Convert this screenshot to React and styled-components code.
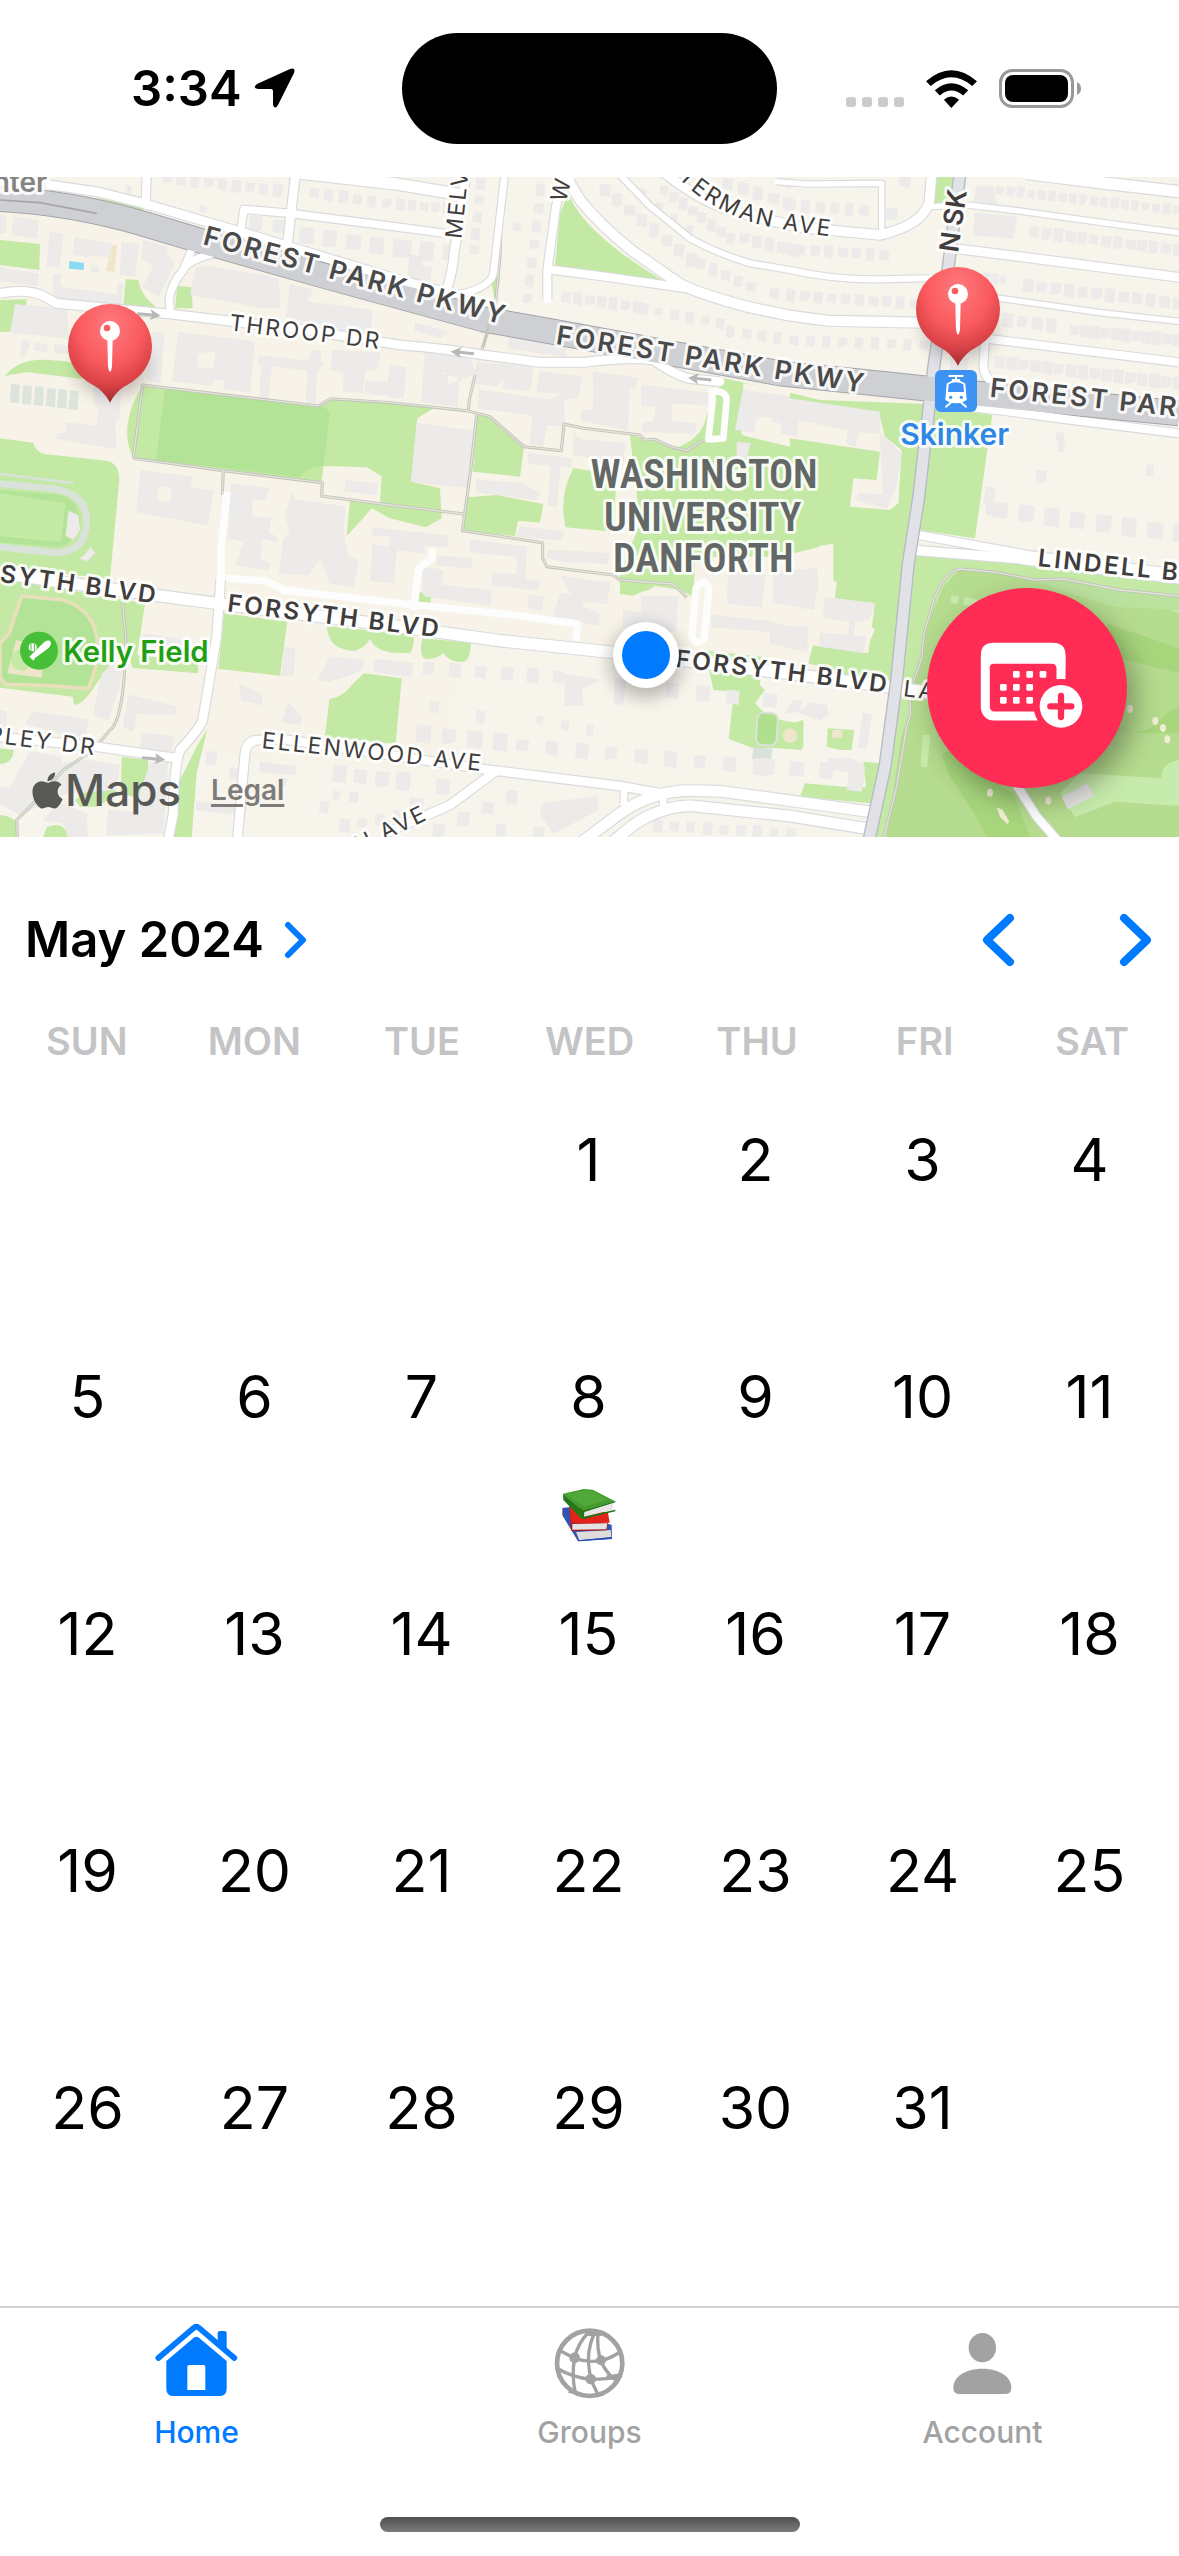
import React, { useState } from "react";
import styled, { createGlobalStyle } from "styled-components";
import { FaApple } from "react-icons/fa";

const font = '"Inter", "Liberation Sans", sans-serif';

const GlobalStyle = createGlobalStyle`
  * { box-sizing: border-box; }
  body { margin: 0; background: #fff; color: #000; font-family: ${font}; }
  button { appearance: none; border: 0; padding: 0; background: none; color: inherit; font: inherit; cursor: pointer; }
  svg { display: block; }
`;

const Screen = styled.div`
  display: flex;
  flex-direction: column;
  min-height: 100vh;
  overflow-x: hidden;
`;

/* ---------- status bar ---------- */

const StatusBar = styled.header`
  display: grid;
  grid-template-columns: 1fr 375px 1fr;
  align-items: center;
  height: 177px;
`;

const StatusLeft = styled.div`
  display: flex;
  align-items: center;
  justify-content: flex-start;
  gap: 12px;
  padding-left: 131px;
`;

const StatusRight = styled.div`
  display: flex;
  align-items: center;
  justify-content: flex-end;
  gap: 22px;
  padding-right: 98px;
`;

const Clock = styled.span`
  font-size: 49px;
  line-height: 60px;
  font-weight: 600;
`;

const Island = styled.div`
  height: 111px;
  border-radius: 56px;
  background: #000;
`;

/* ---------- map ---------- */

const MapPanel = styled.section`
  position: relative;
  height: 660px;
  overflow: hidden;
  background: #f7f4eb;
`;

const MapCanvas = styled.svg`
  width: 100%;
  height: 100%;
`;

const MapText = styled.text`
  font-family: ${font};
  font-size: ${(p) => p.$size}px;
  font-weight: ${(p) => p.$weight || 400};
  letter-spacing: ${(p) => (p.$tracked ? "0.1em" : "normal")};
  fill: ${(p) => p.$color || "#403d3c"};
  stroke: rgba(255, 255, 255, 0.85);
  stroke-width: 18px;
  stroke-linejoin: round;
  paint-order: stroke;
`;

const CampusText = styled(MapText)`
  font-family: "Liberation Sans Narrow", "Roboto Condensed", "Roboto", sans-serif;
`;

const Attribution = styled.div`
  position: absolute;
  left: 32px;
  bottom: 19px;
  display: flex;
  align-items: center;
  gap: 30px;
`;

const MapsBrand = styled.span`
  display: flex;
  align-items: center;
  gap: 2px;
  color: #585856;
  font-size: 44px;
  line-height: 56px;
  font-weight: 500;
`;

const AppleMark = styled(FaApple)`
  width: 31px;
  height: 41px;
`;

const LegalLink = styled.a`
  color: #7e7c79;
  font-size: 28px;
  line-height: 32px;
  font-weight: 600;
  text-decoration: underline;
  text-underline-offset: 4px;
  text-decoration-thickness: 3px;
`;

const AddEventButton = styled.button`
  position: absolute;
  right: 52px;
  bottom: 49px;
  width: 200px;
  height: 200px;
  border-radius: 50%;
  background: #ff2d55;
  box-shadow: 8px 12px 28px rgba(0, 0, 0, 0.34);
`;

/* ---------- calendar ---------- */

const Calendar = styled.main`
  padding-top: 73px;
`;

const CalendarHeader = styled.div`
  display: flex;
  align-items: center;
  justify-content: space-between;
  height: 60px;
  padding: 0 24px 0 25px;
`;

const MonthButton = styled.button`
  display: flex;
  align-items: center;
  gap: 18px;
  font-size: 49px;
  line-height: 60px;
  font-weight: 600;
`;

const MonthNav = styled.div`
  display: flex;
  gap: 98px;
`;

const NavButton = styled.button`
  display: flex;
  align-items: center;
  height: 60px;
`;

const WeekdayRow = styled.div`
  display: grid;
  grid-template-columns: repeat(7, 1fr);
  margin-top: 47px;
  padding: 0 3px;
  color: #c4c4c6;
  font-size: 38px;
  line-height: 48px;
  font-weight: 600;
  text-align: center;
`;

const DayGrid = styled.div`
  display: grid;
  grid-template-columns: repeat(7, 1fr);
  grid-auto-rows: 188px;
  row-gap: 49px;
  margin-top: 59px;
  padding: 0 6px 0 4px;
`;

const DayButton = styled.button`
  display: flex;
  flex-direction: column;
  align-items: center;
  gap: 56px;
  font-size: 59px;
  line-height: 72px;
  grid-column-start: ${(p) => p.$column || "auto"};
`;

/* ---------- tab bar ---------- */

const TabBar = styled.nav`
  display: grid;
  grid-template-columns: repeat(3, 1fr);
  position: relative;
  height: 250px;
  margin-top: auto;
  padding-top: 14px;
  border-top: 2px solid #d2d2d2;
  align-items: start;
`;

const TabButton = styled.button`
  display: flex;
  flex-direction: column;
  align-items: center;
  gap: 12px;
  color: ${(p) => (p.$active ? "#007aff" : "#a2a2a2")};
  font-size: 30px;
  line-height: 36px;
  font-weight: 500;
`;

const HomeIndicator = styled.div`
  position: absolute;
  left: 50%;
  bottom: 24px;
  width: 420px;
  height: 15px;
  margin-left: -210px;
  border-radius: 8px;
  background: linear-gradient(#505050, #7c7c7c);
`;

/* ---------- map data, in thirds of a pixel ---------- */

const GREEN = "#c4e9a5";
const DEEP = "#b3e396";

const greens = [
  "M0 210L120 222L118 300L0 285Z",
  "M377 327L415 330Q425 385 482 420L370 408Z",
  "M532 348L575 352L578 415L525 415Z",
  "M0 390L80 388L78 410L45 415L30 485L0 487Z",
  "M13 618Q60 562 150 570Q240 575 300 600L240 626L80 606Z",
  "M250 78L430 108L430 122L330 100Z",
  "M428 645L955 708L992 688L1170 700L1300 715L1252 745L1233 935L1320 955L1325 1045L1277 1072L1170 1045L1115 1015L1085 1050L1040 1098L1050 992L1140 1000L1145 918L1100 892L970 888L965 935L400 865Q352 770 428 645Z",
  "M0 805L100 818Q105 845 135 852L320 872Q358 880 358 930L330 1225L0 1195Z",
  "M0 1225L435 1300L412 1455L595 1475L594 1510L398 1494L376 1420L290 1540Q250 1605 222 1605L218 1580L0 1553Z",
  "M672 1330L862 1355L840 1517L655 1497Z",
  "M980 1368Q985 1440 1060 1442Q1090 1440 1110 1408Q1130 1445 1180 1448L1230 1450Q1245 1430 1240 1395Z",
  "M1267 1405Q1255 1465 1280 1467Q1310 1468 1330 1450Q1350 1477 1385 1476Q1412 1475 1413 1418Z",
  "M988 1588Q1030 1580 1055 1545L1092 1510L1205 1525L1187 1722L975 1700Z",
  "M622 1677L590 1810L575 2001L523 2001L540 1830L590 1730Z",
  "M0 1735L42 1740Q40 1780 0 1783Z",
  "M365 1760L445 1770L440 1890L362 1870Z",
  "M225 1890L290 1838L360 1870L290 1910L240 1910Z",
  "M0 1935Q45 1940 48 1960L48 2001L0 2001Z",
  "M130 2001L140 1972Q195 1950 203 2001Z",
  "M1705 70Q1750 190 1990 332L1665 287L1680 130Z",
  "M1498 215L1500 330L1485 400L1475 340Z",
  "M1432 735L1470 740L1572 832L1560 920L1418 905Z",
  "M1402 982L1490 975L1630 1002L1620 1058L1555 1052L1545 1098L1388 1082Z",
  "M1720 895L1850 912L1840 1085L1697 1072Q1675 980 1720 895Z",
  "M1257 1267L1294 1270L1292 1300L1256 1295Z",
  "M1890 795L2035 832Q2110 800 2120 735L2170 625L2370 668L2460 690L2775 702L2700 1560L2425 1480L2440 1422L2595 1448L2625 1378L2500 1290L2500 1120L2340 1160L2085 1180L2080 1280L2040 1260L1855 1230L1880 1160L1920 1060Z",
  "M1860 1232L1970 1240Q1955 1262 1925 1265L1900 1277L1860 1272Z",
  "M2105 1388L2287 1405L2280 1545L2295 1560L2265 1600L2290 1625L2370 1662L2410 1650L2410 1735L2260 1735L2186 1707L2202 1565L2140 1560Z",
  "M2340 1650L2410 1662L2405 1740L2340 1735Z",
  "M2483 1675L2563 1680L2555 1740L2520 1740L2480 1730Z",
  "M2415 1840L2530 1850L2598 1852L2590 1775L2640 1780L2612 1900L2400 1880Z",
  "M2770 700L2977 735L2962 840L2925 1105L2755 1080Z",
  "M2802 20L2860 20L2845 110L2798 112Z",
  "M2745 1150L2960 1175L3120 1185L3537 1235L3537 2001L2620 2001L2690 1620Z",
];

const plots = [
  [DEEP, "M495 658L955 708Q985 715 990 728L970 888Q920 890 900 922L468 870Z"],
  [DEEP, "M0 960L180 975Q235 990 240 1050Q235 1120 170 1130L0 1118Z"],
  ["#c4eba6", "M0 970L196 1000L183 1117L0 1098Z"],
  ["#edebea", "M205 1022L235 1035L240 1080L220 1110L197 1097Z"],
  ["#f0e7cb", "M337 224L352 226L342 306L317 303Z"],
  ["#8ad9f2", "M208 273L252 279L251 300L207 296Z"],
  ["#f8f3e8", "M2340 680L2640 740L2655 800L2705 840L2695 1000L2670 1020L2550 1010L2560 925L2630 930L2640 845L2340 800Z"],
  ["#f8f3e8", "M2340 1160L2457 1180L2460 1125L2498 1130L2490 1230L2510 1235L2505 1285L2625 1300L2605 1450L2430 1425L2425 1475L2100 1440L2140 1160Z"],
  ["#f8f3e8", "M2230 640L2370 660L2370 830L2225 795Z"],
  ["#b6dc8f", "M2880 1197L2990 1207L3100 1230L3190 1228L3360 1260L3537 1330L3537 2001L2660 2001L2705 1690L2730 1640L2728 1580L2762 1480L2770 1390L2830 1250Z"],
  ["#bbe19f", "M3100 1232L3190 1228L3537 1280L3537 1320L3340 1310L3180 1260Z"],
  ["#a7d67c", "M3320 1360L3537 1435L3537 1510L3380 1470L3320 1450Z"],
  ["#a7d67c", "M3340 1670Q3430 1710 3480 1650Q3510 1620 3537 1610L3537 1690L3420 1690Z"],
  ["#a7d67c", "M2825 1755Q2850 1730 2880 1770L3040 1870L3090 2001L2960 2001Q2920 1920 2850 1820Z"],
  ["#c7ebac", "M3240 1810L3485 1825Q3480 1780 3537 1770L3537 1908L3345 1895L3225 1942L3180 1870Z"],
  ["#c7ebac", "M2768 1695L2790 1696L2782 1792L2762 1790Z"],
  ["#c7ebac", "M2855 1277L2878 1280L2872 1302L2851 1298ZM2895 1280L2935 1290L2925 1310L2890 1305Z"],
  ["#e6e4e3", "M3185 1880L3262 1840L3282 1878L3203 1918Z"],
  ["#d9e2da", "M2260 1730L2318 1738L2312 1776L2256 1768Z"],
];

const parks = [
  "M65 1278L190 1290Q285 1320 293 1420Q297 1480 265 1556L150 1547L20 1543L0 1525L0 1420L28 1390Z",
];

const buildings = [
  "M0 135L20 138L15 190L0 190Z", "M42 140L115 152L112 205L36 195Z", "M150 186L190 192L178 292L140 287Z",
  "M225 203L335 222L328 262L268 255L265 262L218 253Z", "M367 217L416 222L405 318L360 314Z",
  "M430 210L500 232L500 250L524 280L475 380L428 352L462 287L423 262Z", "M0 293L115 312L112 348L0 332Z",
  "M160 312L182 316L180 350L350 376L356 338L370 342L362 405L160 382Z", "M276 285L296 290L292 309L274 305Z",
  "M45 402L200 420L205 505L32 487Z", "M67 510L92 515L75 560L60 555Z", "M108 518L142 524L140 545L105 540Z", "M165 523L205 528L204 552L162 548Z",
  "M570 375L590 290L640 290L835 325L840 410L800 415L690 395Z", "M870 345L940 358L920 395L1115 420L1112 500L860 440Z",
  "M460 487L493 490L480 640L440 630Z", "M535 487L763 515L750 665L673 658L675 632L640 626L637 648L518 632ZM595 548L588 592L640 598L648 544Z",
  "M778 556L925 573L935 540L962 545L960 575L970 580L950 610L945 700L918 697L923 600L815 588L804 688L778 685L785 590L775 582Z",
  "M998 540L1140 550L1130 600L1095 602L1088 668L1030 662L1032 610L993 600Z", "M1098 635L1165 635L1172 590L1210 592L1205 682L1095 670Z",
  "M282 650L362 670L356 752L345 752L347 836L170 805L172 792L200 790L198 758L290 768L298 710L282 705Z",
  "M422 902L578 920L570 950L640 965L622 1065L410 1025ZM474 948L468 990L510 998L516 952Z",
  "M693 942L808 955L795 990L755 985L757 1040L812 1045L806 1090L832 1100L830 1115L785 1105L780 1170L808 1180L806 1200L708 1185L732 1115L685 1105Z",
  "M878 970L888 990L1035 1010L1030 1090L1045 1160L1075 1170L1060 1250L990 1240L962 1165L925 1215L838 1210L852 1105L870 1090L855 1030Z",
  "M1038 930L1132 942L1128 975L1034 962Z", "M1118 1075L1190 1080L1190 1100L1113 1095Z", "M1118 1122L1190 1135L1184 1200L1115 1188Z", "M1115 1188L1185 1195L1180 1240L1110 1232Z",
  "M1250 760L1422 783L1400 953L1233 935Z", "M1170 585L1218 592L1210 685L1165 680Z", "M1275 545L1405 560L1430 608L1345 645L1340 605L1315 612L1376 620L1372 710L1265 695Z",
  "M1430 578L1600 590L1590 662L1510 655L1512 625L1490 648L1425 640Z", "M1438 660L1650 690L1690 670L1610 665L1620 605L1745 620L1735 680L1690 690L1695 765L1740 770L1640 765L1628 828L1590 822L1598 735L1434 715Z",
  "M1780 605L1915 625L1905 655L1888 652L1883 780L1742 750L1748 718L1780 722Z", "M1925 645L2125 670L2120 705L2015 700L2013 755L2088 760L2085 790L1925 785L1930 757L1960 757L1968 712L1925 706Z",
  "M2228 660L2370 680L2370 765L2320 755L2315 740L2270 740L2262 787L2205 780Z", "M2210 815L2252 820L2240 865L2210 862Z",
  "M1585 850L1715 865L1715 890L1680 888L1670 1010L1645 1005L1652 888L1585 880Z", "M1720 785L1740 808L1875 820L1870 875L1820 870L1720 855Z",
  "M1430 930L1565 940L1620 970L1610 990L1430 965Z", "M1560 1070L1690 1085L1685 1110L1550 1100Z",
  "M1170 1080L1345 1097L1342 1132L1275 1125L1272 1150L1170 1138Z", "M1312 1158L1415 1165L1415 1195L1310 1185Z", "M1412 1110L1580 1130L1575 1225L1620 1235L1615 1260L1475 1245L1480 1208L1550 1215L1552 1160L1410 1145Z",
  "M1270 1192L1330 1200L1325 1245L1475 1262L1470 1306L1270 1278Z", "M1585 1275L1630 1280L1625 1320L1586 1315Z", "M1645 1140L1830 1150L1820 1180L1690 1175L1640 1160Z",
  "M1685 1218L1830 1240L1820 1300L1750 1295L1745 1310L1800 1330L1795 1365L1660 1340L1680 1270L1715 1275Z",
  "M1925 1280L2035 1280L2025 1385L1870 1370L1870 1320L1925 1330Z", "M2185 1205L2295 1215L2285 1312L2182 1300Z", "M2135 1335L2310 1355L2305 1385L2135 1370Z",
  "M2310 1355L2370 1370L2425 1370L2420 1445L2310 1420Z", "M2320 1205L2450 1195L2455 1240L2440 1320L2320 1295Z",
  "M2340 680L2640 725L2640 790L2575 785L2565 830L2540 820L2545 780L2395 750L2390 800L2345 790Z",
  "M2640 790L2705 850L2685 960L2660 1015L2570 990L2575 970L2650 975Z", "M2475 1282L2625 1300L2605 1350L2565 1355L2560 1395L2545 1395L2550 1355L2470 1340Z",
  "M2460 1390L2598 1400L2590 1450L2460 1430Z", "M2590 1630L2615 1635L2600 1735L2575 1730Z", "M2485 1765L2555 1765L2595 1790L2585 1865L2540 1860L2548 1805L2485 1800Z",
  "M2380 1590L2405 1595L2400 1625L2430 1600L2480 1605L2485 1635L2460 1650L2390 1625L2355 1630Z",
  "M305 1510L368 1465L360 1540L325 1650L280 1635Z", "M432 1390L545 1410L550 1440L430 1430Z", "M385 1575L528 1610L525 1635L410 1630L400 1685L370 1672Z", "M100 1625L265 1650L255 1710L77 1660Z",
  "M425 1688L520 1700L515 1755L422 1740Z", "M90 1745L180 1760L185 1780L260 1770L358 1785L350 1860L200 1870L60 1935L0 1900L0 1850L30 1855Z", "M180 1900L260 1930L262 2001L205 2001L190 1960L130 1950Z",
  "M450 1780L503 1780L490 1990L320 1995L325 1920L400 1925Z", "M855 1432L885 1435L880 1515L845 1517Z", "M990 1460L1090 1470L1088 1500L1050 1515L985 1535L955 1530Z", "M1125 1468L1240 1480L1235 1520L1122 1505Z",
  "M718 1545L760 1560L788 1575L785 1605L725 1590Z", "M865 1600L905 1640L900 1665L848 1655Z",
  "M1695 1512L1800 1530L1745 1555L1750 1605L1695 1605Z", "M1845 1525L1880 1530L1868 1605L1842 1600Z",
  "M1230 255L1265 258L1268 292L1295 290L1290 330L1220 345Z", "M0 1620L20 1625L18 1680L0 1680Z",
  "M590 1895L740 1910L735 1935L590 1920Z", "M780 1775L888 1790L885 1815L780 1805Z", "M250 1158L272 1131L287 1150L258 1175L238 1165Z",
  "M1630 1900L1790 1880L1795 1920L1660 1990L1620 1930Z",
  "M2930 50L2980 50L2990 105L2920 108Z", "M2925 130L3050 140L3040 205L2920 195Z", "M2955 990L3010 1030L2960 1035Z", "M1245 460L1345 485L1320 505L1245 480Z", "M1530 500L1700 525L1695 560L1525 535Z",
  "M2855 560L2905 565L2900 600L2850 600Z", "M2960 950L2985 955L2980 1000L2950 1000Z",
];

/* rows of detached houses: start, end, count, size */
const houseRows = [
  [490, 25, 820, 60, 9, 30], [930, 68, 1190, 105, 7, 30], [900, 195, 1180, 235, 5, 46], [750, 160, 820, 168, 2, 42], [380, 60, 390, 62, 1, 20], [600, 115, 620, 118, 1, 22],
  [1190, 100, 1330, 115, 5, 28], [1190, 235, 1330, 248, 3, 48], [1430, 40, 1410, 240, 5, 30], [1610, 60, 1570, 385, 7, 30], [1540, 170, 1545, 180, 1, 24],
  [1800, 60, 2060, 270, 8, 34], [2090, 280, 2240, 350, 5, 30], [1920, 70, 2060, 180, 4, 24], [1980, 60, 2180, 205, 8, 30], [2220, 205, 2370, 240, 5, 32],
  [1685, 380, 1900, 410, 7, 30], [1920, 415, 2150, 460, 6, 28], [2180, 485, 2370, 510, 5, 28], [2170, 40, 2350, 100, 5, 34], [2310, 370, 2360, 375, 2, 30],
  [2360, 105, 2580, 120, 6, 30], [2350, 235, 2640, 255, 8, 30], [2360, 375, 2730, 400, 10, 30], [2370, 510, 2760, 525, 9, 28], [2660, 130, 2680, 130, 1, 34], [2700, 30, 2720, 40, 1, 34], [2360, 40, 2380, 40, 1, 24],
  [2990, 60, 3520, 120, 18, 26], [3090, 185, 3520, 240, 13, 32], [2950, 320, 3000, 330, 3, 24], [3070, 345, 3520, 400, 12, 34], [3010, 450, 3140, 465, 4, 34], [3210, 480, 3520, 510, 11, 32],
  [2985, 575, 3520, 640, 16, 34], [3170, 800, 3175, 830, 2, 24], [3110, 920, 3120, 925, 1, 32], [3440, 900, 3445, 905, 1, 24], [2980, 1020, 3520, 1090, 8, 48],
  [1270, 1495, 1660, 1520, 6, 38], [1290, 1610, 1430, 1640, 2, 28], [1250, 1690, 1480, 1715, 4, 46], [1550, 1725, 2260, 1790, 9, 40], [1610, 1650, 1760, 1680, 3, 24], [2000, 1560, 2180, 1580, 3, 42], [2280, 1790, 2460, 1800, 3, 46],
  [1000, 1810, 1190, 1835, 4, 42], [1190, 1825, 1310, 1850, 2, 46], [1000, 1875, 1050, 1880, 2, 26], [960, 1910, 965, 1915, 1, 32], [1020, 1965, 1180, 1940, 4, 32], [620, 1765, 690, 1810, 2, 34], [1230, 1905, 1240, 1905, 1, 44],
  [1300, 1980, 1520, 1880, 4, 38], [1490, 1980, 1600, 1990, 2, 34], [1960, 1965, 2360, 1990, 9, 30], [2290, 1590, 2320, 1595, 1, 44], [840, 1835, 845, 1840, 1, 26],
];

const houses = houseRows
  .flatMap(([x1, y1, x2, y2, n, s], row) =>
    Array.from({ length: n }, (_, i) => {
      const t = n === 1 ? 0 : i / (n - 1);
      const x = Math.round(x1 + (x2 - x1) * t);
      const y = Math.round(y1 + (y2 - y1) * t);
      const w = s - ((i * 7 + row) % 5);
      const h = s + ((i * 5 + row * 3) % 14) - 2;
      const k = (i + row) % 3 === 0 ? 8 : 0;
      return `M${x} ${y - h / 2}l${w} 4l-4 ${h - k}l${-w / 2} ${k - 4}l${-w / 2 + 1} -2Z`;
    })
  )
  .join("");

const minor = [
  [24, "M440 15L437 105"], [26, "M886 15L862 225"], [22, "M720 195L732 118L870 130L1200 172L1335 190"], [34, "M890 8L1190 42L1370 72"],
  [26, "M1398 15L1362 250Q1360 300 1335 375"], [20, "M1514 15L1480 310Q1475 345 1400 368L1330 378"], [24, "M1692 15L1668 110L1642 300L1642 388"],
  [24, "M1645 298L1800 318L2060 355"], [30, "M1695 15L1740 90Q1800 165 1900 245L2030 335Q2060 360 2240 410L2370 437L2480 452L2770 458"],
  [18, "M1860 15L1950 108L2070 205Q2150 250 2250 280L2370 300Q2500 330 2640 328L2790 325"],
  [28, "M1960 -20Q2070 80 2200 125L2400 172L2640 195Q2770 165 2788 95L2795 15"], [16, "M2330 35L2420 42L2645 40L2645 190"],
  [34, "M3080 10L3300 38L3537 65"], [16, "M2790 110L2900 105L3050 122L3360 165L3537 188"], [26, "M2860 235L3100 265L3537 322"], [16, "M2980 382L3300 428L3537 454"], [24, "M2950 505L3537 577M2955 505L2950 585Q2955 640 3000 640"],
  [24, "M2800 700L3010 722L3200 748L3537 790"],
  [26, "M0 370Q80 355 130 378L170 400L510 432L900 478L1200 525Q1330 535 1450 555L1620 577L1750 577Q1900 560 1960 570Q2040 625 2080 627L2160 635"],
  [22, "M511 432L508 385Q515 340 550 300L575 240M555 290Q590 255 700 240"], [26, "M150 45L290 65L430 100L720 185L1200 330L1330 365"],
  [26, "M662 1228L650 1400L630 1520L608 1650Q600 1675 540 1740Q520 1800 520 1930L505 2010"],
  [34, "M-10 1208L460 1275L650 1300L1170 1366L1500 1412L1770 1440L2040 1470L2400 1515L2700 1555L2790 1568"],
  [26, "M-10 1700L290 1730L530 1765"], [26, "M712 2010L735 1750Q740 1708 780 1710L850 1708L1200 1760L1470 1800L1860 1848L1980 1870"],
  [26, "M1485 1805L1350 1905L1160 1988"], [32, "M1740 2020L1860 1930Q1960 1860 2080 1862L2160 1864L2370 1892L2610 1925"], [32, "M1820 2030L1900 1965Q1990 1905 2080 1908L2370 1938L2595 1975"],
  [20, "M1872 1850L1872 1900M1990 1870L1990 1920"],
  [24, "M2755 1095L3070 1152L3100 1170"], [28, "M2755 1142L3080 1168"], [42, "M3070 1162L3537 1220"], [24, "M3040 1830L3110 1940L3180 2020"],
];

const service = [
  [22, "M682 965L663 1130L665 1240"], [22, "M675 1225L790 1232Q820 1240 850 1260L1200 1300L1540 1335L1732 1362L1728 1412"], [22, "M1298 1135L1295 1165L1257 1195L1240 1320"],
  [20, "M2135 665Q2180 660 2180 690L2170 805L2125 808L2138 690Z"], [22, "M2088 1255Q2110 1220 2127 1255L2112 1405Q2090 1430 2075 1400Z"],
];

const paths = [
  "M400 865L428 645L955 708L992 686L1170 698L1400 722L1470 740L1572 830L1684 842L1692 762L1750 775L1920 795L1935 810L1965 808L2010 830L2060 842L2110 810",
  "M400 865L670 902L967 938L965 978L1170 1005L1392 1032M670 902L667 970L675 970", "M1502 195L1500 260L1485 420L1435 570M1425 615L1408 690L1405 722M1430 735L1412 900L1387 1082L1628 1118L1628 1165L1640 1190L1840 1215L1860 1230L2020 1242L2060 1282",
  "M368 1300L378 1410L372 1530Q360 1660 330 1680L280 1740L190 1800L100 1900L50 1950L52 2001",
  "M2650 2010L2690 1850L2720 1670L2732 1630L2728 1570L2765 1465L2772 1390L2805 1280Q2840 1200 2880 1197L2990 1207L3105 1230L3190 1227L3360 1260L3537 1278",
];

const parkway = "M-20 86Q200 95 420 158L610 215L1000 325L1450 448L1670 487L2340 610L2650 642L2840 662L3537 730";
const skinker = "M2880 10L2845 290L2800 600L2755 990L2725 1180L2690 1530L2655 1790L2605 2020";

const Pin = ({ x, y }) => (
  <g transform={`translate(${x} ${y})`}>
    <ellipse cx="6" cy="60" rx="110" ry="90" fill="#000" opacity=".22" filter="url(#soft)" />
    <path d="M-126 0A126 126 0 1 1 126 0C126 50 98 92 50 118C28 130 12 148 0 170C-12 148 -28 130 -50 118C-98 92 -126 50 -126 0Z" fill="url(#pinFill)" />
    <circle cy="-45" r="30" fill="#fff" />
    <circle cx="-9" cy="-54" r="10" fill="#fa5b60" />
    <path d="M-8 -18H8L6 62Q0 92 -6 62Z" fill="#fff" />
  </g>
);

const Arrow = ({ x, y, angle }) => (
  <path transform={`translate(${x} ${y}) rotate(${angle})`} d="M-36 -4H8L2 -17L34 0L2 17L8 5H-36Z" fill="#b7b7b6" />
);

const at = (x, y, angle) => `translate(${x} ${y}) rotate(${angle})`;

function CampusMap() {
  return (
    <MapCanvas viewBox="0 21 3537 1980" preserveAspectRatio="xMidYMid slice" role="img" aria-label="Map of Washington University Danforth campus">
      <defs>
        <radialGradient id="pinFill" cx="50%" cy="22%" r="78%">
          <stop offset="0" stopColor="#ff7a7d" />
          <stop offset=".5" stopColor="#f95a5f" />
          <stop offset=".78" stopColor="#d84145" />
          <stop offset="1" stopColor="#a02c30" />
        </radialGradient>
        <filter id="soft" x="-50%" y="-50%" width="200%" height="200%">
          <feGaussianBlur stdDeviation="24" />
        </filter>
        <path id="watermanLine" d="M2034 22Q2130 125 2290 166Q2400 190 2580 210" />
      </defs>
      <path d="M0 0H3537V2010H0Z" fill="#f7f4ec" />
      <path d="M0 100L600 230L1450 470L2160 600L2780 690L2700 1560L1400 1400L1180 1370L1380 1440L1330 1800L0 1720Z" fill="#f8f3e8" />
      {greens.map((d) => <path key={d} d={d} fill={GREEN} />)}
      {plots.map(([fill, d]) => <path key={d} d={d} fill={fill} />)}
      {parks.map((d) => <path key={d} d={d} fill={DEEP} stroke="#e9e0bb" strokeWidth="11" />)}
      <path d="M48 1410L130 1430L125 1523L22 1510Z" fill="#eee5c8" />
      <circle cx="65" cy="1470" r="32" fill={GREEN} />
      <path d="M-10 940L165 957Q262 975 260 1055Q255 1150 165 1148L-10 1130" fill="none" stroke="#dae3da" strokeWidth="21" />
      <path d="M0 912L220 939" stroke="#dae3da" strokeWidth="7" />
      {[30, 66, 102, 138, 172, 206].map((x, i) => (
        <path key={x} d={`M${x + 4} ${641 + i * 4}l26 3l-3 56l-28 -3Z`} fill="#dce4dc" />
      ))}
      <rect x="2270" y="1628" width="62" height="98" rx="20" transform="rotate(4 2300 1676)" fill="#afe08e" stroke="#dce3da" strokeWidth="6" />
      <circle cx="2370" cy="1697" r="22" fill="#eee5cb" />
      <path d="M2498 1680L2528 1680L2526 1704L2496 1702Z" fill="#efe6cf" />
      {[[3390, 1617], [3466, 1653], [3489, 1674], [3502, 1708], [2970, 1868], [3145, 1892]].map(([x, y]) => (
        <ellipse key={x} cx={x} cy={y} rx="9" ry="12" fill="#f3edd3" />
      ))}
      <path d="M2990 1912L3008 1920L3028 1955L3022 1962L3000 1940Z" fill="#f3edd3" />
      <path d={houses} fill="#edebe9" />
      {buildings.map((d) => <path key={d} d={d} fill="#edebea" fillRule="evenodd" stroke="#dddbd9" strokeWidth="2" strokeDasharray="2 5" />)}
      <g fill="none" strokeLinejoin="round">
        {paths.map((d) => <path key={d} d={d} stroke="#bfc2b8" strokeWidth="9" />)}
        {paths.map((d) => <path key={d} d={d} stroke="#e3e3da" strokeWidth="4" />)}
        {service.map(([w, d]) => <path key={d} d={d} stroke="#fdfdfd" strokeWidth={w} />)}
        {minor.map(([w, d]) => <path key={d} d={d} stroke="#d9dbdc" strokeWidth={w + 7} />)}
        <path d={parkway} stroke="#a2a4a8" strokeWidth="78" />
        {minor.map(([w, d]) => <path key={d} d={d} stroke="#fff" strokeWidth={w} strokeLinecap="round" />)}
        <path d={skinker} stroke="#b8bac0" strokeWidth="40" />
        <path d={skinker} stroke="#e1e2e7" strokeWidth="32" />
        <path d={parkway} stroke="#cfd0d4" strokeWidth="72" />
        <path d="M0 90L120 98L290 130" stroke="#a5a6aa" strokeWidth="5" />
        <path d="M1475 430L1450 530" stroke="#c7c7be" strokeWidth="9" />
      </g>
      <Arrow x={448} y={434} angle={5} />
      <Arrow x={1386} y={548} angle={186} />
      <Arrow x={2098} y={627} angle={186} />
      <Arrow x={462} y={1766} angle={5} />

      <MapText $size={84} $weight={600} $color="#858483" x="-22" y="66">nter</MapText>
      <MapText $size={80} $weight={600} $tracked $color="#4b4a4a" transform={at(606, 222, 15)}>FOREST PARK PKWY</MapText>
      <MapText $size={80} $weight={600} $tracked $color="#4b4a4a" transform={at(1666, 522, 9)}>FOREST PARK PKWY</MapText>
      <MapText $size={80} $weight={600} $tracked $color="#4b4a4a" transform={at(2968, 680, 6)}>FOREST PAR</MapText>
      <MapText $size={68} $tracked transform={at(686, 481, 7)}>THROOP DR</MapText>
      <MapText $size={68} $tracked transform={at(1384, 208, -84)}>MELV</MapText>
      <MapText $size={68} $tracked transform={at(1697, 98, -76)}>WE</MapText>
      <MapText $size={68} $tracked><textPath href="#watermanLine">TERMAN AVE</textPath></MapText>
      <MapText $size={80} $weight={600} transform={at(2874, 250, -82)}>N SK</MapText>
      <MapText $size={73} $weight={600} $tracked transform={at(-2, 1235, 8)}>SYTH BLVD</MapText>
      <MapText $size={73} $weight={600} $tracked transform={at(680, 1324, 7)}>FORSYTH BLVD</MapText>
      <MapText $size={73} $weight={600} $tracked transform={at(2024, 1490, 7)}>FORSYTH BLVD</MapText>
      <MapText $size={73} $weight={600} $tracked transform={at(3112, 1188, 6)}>LINDELL B</MapText>
      <MapText $size={68} $tracked transform={at(2708, 1578, 7)}>LA</MapText>
      <MapText $size={68} $tracked transform={at(-38, 1716, 7)}>PLEY DR</MapText>
      <MapText $size={68} $tracked transform={at(784, 1734, 6)}>ELLENWOOD AVE</MapText>
      <MapText $size={68} $tracked transform={at(1078, 2048, -26)}>U AVE</MapText>
      <CampusText $size={120} $weight={600} $color="#636867" textAnchor="middle">
        <tspan x="2112" y="955">WASHINGTON</tspan>
        <tspan x="2108" y="1082">UNIVERSITY</tspan>
        <tspan x="2110" y="1207">DANFORTH</tspan>
      </CampusText>

      <circle cx="117" cy="1442" r="57" fill="#48bf38" />
      <path d="M88 1462L133 1418Q146 1410 152 1417Q156 1423 146 1436L105 1466L100 1474L94 1468Z" fill="#fff" transform="translate(0 -2)" />
      <circle cx="98" cy="1432" r="12" fill="#fff" />
      <path d="M93 1422V1442M103 1422V1442" stroke="#48bf38" strokeWidth="3" />
      <MapText $size={88} $weight={600} $color="#1fa012" x="190" y="1476">Kelly Field</MapText>

      <rect x="2805" y="600" width="126" height="126" rx="18" fill="#3d93f3" />
      <g fill="none" stroke="#fff" strokeWidth="6" strokeLinecap="round">
        <path d="M2848 618H2888M2868 618V630M2858 630H2878" />
        <path d="M2843 642Q2868 626 2893 642L2897 688Q2868 706 2839 688Z" />
        <path d="M2852 698L2838 710M2884 698L2898 710" />
      </g>
      <path d="M2838 666H2898L2896 692Q2868 704 2840 692Z" fill="#fff" />
      <circle cx="2852" cy="682" r="5" fill="#3d93f3" />
      <circle cx="2884" cy="682" r="5" fill="#3d93f3" />
      <MapText $size={90} $weight={600} $color="#2f86e8" x="2864" y="826" textAnchor="middle">Skinker</MapText>

      <Pin x={330} y={528} />
      <Pin x={2874} y={417} />
      <circle cx="1938" cy="1475" r="110" fill="#000" opacity=".24" filter="url(#soft)" />
      <circle cx="1938" cy="1455" r="99" fill="#fff" />
      <circle cx="1938" cy="1455" r="72" fill="#007aff" />
    </MapCanvas>
  );
}

const CalendarAddIcon = () => (
  <svg width="200" height="200" viewBox="0 0 600 600" aria-hidden="true">
    <rect x="175" y="178" width="227" height="206" rx="26" fill="none" stroke="#fff" strokeWidth="27" />
    <path d="M162 240V200Q162 165 197 165H380Q415 165 415 200V240Z" fill="#fff" />
    <path d="M188 242V240Q188 227 201 227H374Q388 227 388 240V242Z" fill="#ff2d55" />
    {[[268, 259], [308, 259], [348, 259], [229, 298], [268, 298], [308, 298], [229, 337], [268, 337], [308, 337]].map(([x, y]) => (
      <rect key={`${x}-${y}`} x={x - 10} y={y - 10} width="20" height="20" rx="4" fill="#fff" />
    ))}
    <path d="M385 274H425V300H385Z" fill="#ff2d55" />
    <circle cx="402" cy="355" r="82" fill="#ff2d55" />
    <circle cx="402" cy="355" r="64" fill="#fff" />
    <path d="M370 355H433M402 324V387" stroke="#ff2d55" strokeWidth="19" strokeLinecap="round" />
  </svg>
);

const Chevron = ({ width, height, stroke, left }) => (
  <svg width={width} height={height} viewBox={`0 0 ${width} ${height}`} aria-hidden="true">
    <path
      d={
        left
          ? `M${width - stroke} ${stroke}L${stroke} ${height / 2}L${width - stroke} ${height - stroke}`
          : `M${stroke} ${stroke}L${width - stroke} ${height / 2}L${stroke} ${height - stroke}`
      }
      fill="none"
      stroke="#007aff"
      strokeWidth={stroke}
      strokeLinecap="round"
      strokeLinejoin="round"
    />
  </svg>
);

const Books = () => (
  <svg width="54" height="53" viewBox="180 89 162 159" role="img" aria-label="Books">
    <path d="M181 146L206 143L230 175L329 196L330 238L228 246L181 168Z" fill="#3453ae" />
    <path d="M222 218L326 212L328 233L232 243Z" fill="#dedddc" />
    <path d="M228 243L330 234V239L230 246Z" fill="#2a49b8" />
    <path d="M202 140L318 160L323 190L207 192Z" fill="#e3231a" />
    <path d="M202 145L208 192L318 190L314 213L208 215Z" fill="#b8130f" />
    <path d="M211 194L316 192L313 210L211 211Z" fill="#e4e3e2" />
    <path d="M183 103L245 89L272 91L339 126L244 154Z" fill="#439c2d" />
    <path d="M183 103L244 154L240 180L184 122Z" fill="#237a17" />
    <path d="M244 157L334 130L331 151L246 173Z" fill="#e8e7e6" />
    <path d="M240 155L340 125V129L247 158L246 172L340 151V156L241 180Z" fill="#1d7414" />
    <path d="M192 105L246 93L268 94L320 121L246 142Z" fill="#5cb344" opacity=".5" />
  </svg>
);

const HomeIcon = () => (
  <svg width="84" height="80" viewBox="73 36 252 240" aria-hidden="true">
    <path d="M83 144L189 54Q197 46 205 54L311 144" fill="none" stroke="currentColor" strokeWidth="17" strokeLinecap="round" />
    <path d="M261 92V70Q261 63 268 63H281Q288 63 288 70V122L261 100Z" fill="currentColor" />
    <path fillRule="evenodd" d="M107 153L191 82Q197 78 203 82L288 153V236Q288 258 266 258H129Q107 258 107 236ZM176 165Q170 165 170 171V240H224V171Q224 165 218 165Z" fill="currentColor" />
  </svg>
);

const NetworkIcon = () => (
  <svg width="84" height="80" viewBox="1252 36 252 240" aria-hidden="true">
    <g fill="none" stroke="currentColor" strokeWidth="10">
      <circle cx="1377" cy="160" r="98" strokeWidth="14" />
      <path d="M1288 122L1332 145Q1370 158 1411 152Q1440 145 1468 126" />
      <path d="M1283 177Q1325 202 1380 208Q1430 208 1468 199" />
      <path d="M1375 66Q1340 100 1332 145Q1322 195 1334 248" />
      <path d="M1392 66Q1365 130 1376 180L1380 208L1400 250" />
      <path d="M1402 66Q1398 120 1411 152Q1420 178 1445 203" />
    </g>
    <g fill="currentColor">
      <circle cx="1332" cy="143" r="16" />
      <circle cx="1411" cy="151" r="15" />
      <circle cx="1380" cy="207" r="16" />
      <path d="M1425 197L1475 188L1465 215L1436 208Z" />
      <path d="M1368 62H1412V78H1360Z" />
      <path d="M1320 232L1345 255L1312 248Z" />
    </g>
  </svg>
);

const PersonIcon = () => (
  <svg width="84" height="80" viewBox="0 0 252 240" aria-hidden="true">
    <ellipse cx="124" cy="77" rx="41" ry="44" fill="currentColor" />
    <path d="M37 197C37 165 72 140 124 140S211 165 211 197Q211 216 192 216H56Q37 216 37 197Z" fill="currentColor" />
  </svg>
);

const StatusIcons = () => (
  <>
    <svg width="58" height="38" viewBox="0 0 58 38" aria-hidden="true">
      {[0, 16, 32, 48].map((x) => <rect key={x} x={x} y="27" width="10" height="10" rx="3" fill="#cbcbcb" />)}
    </svg>
    <svg width="51" height="38" viewBox="319 56 151 112" role="img" aria-label="Wi-Fi">
      <path d="M319 89Q394 24 470 89L456 103Q394 52 333 103Z" />
      <path d="M345 116Q394 74 444 116L429 131Q394 102 360 131Z" />
      <path d="M372 144Q394 125 417 144L394 168Z" />
    </svg>
    <svg width="82" height="39" viewBox="0 0 82 39" role="img" aria-label="Battery full">
      <rect x="1.5" y="1.5" width="72" height="36" rx="12" fill="none" stroke="#999" strokeWidth="3" />
      <rect x="6" y="6" width="63" height="27" rx="8" />
      <path d="M78 13Q82 15 82 19.500T78 26Z" fill="#999" />
    </svg>
  </>
);

const weekdays = ["SUN", "MON", "TUE", "WED", "THU", "FRI", "SAT"];
const days = Array.from({ length: 31 }, (_, i) => i + 1);
const tabs = [
  ["Home", HomeIcon],
  ["Groups", NetworkIcon],
  ["Account", PersonIcon],
];

export default function App() {
  const [tab, setTab] = useState("Home");
  return (
    <Screen>
      <GlobalStyle />
      <StatusBar>
        <StatusLeft>
          <Clock>3:34</Clock>
          <svg width="41" height="41" viewBox="0 0 41 41" aria-hidden="true">
            <path d="M36 1Q42 -1 40 5L24 37Q21 42 19 37V23Q19 21 17 21H4Q-2 20 3 16Z" />
          </svg>
        </StatusLeft>
        <Island />
        <StatusRight>
          <StatusIcons />
        </StatusRight>
      </StatusBar>

      <MapPanel>
        <CampusMap />
        <Attribution>
          <MapsBrand>
            <AppleMark aria-hidden="true" />
            Maps
          </MapsBrand>
          <LegalLink href="#legal">Legal</LegalLink>
        </Attribution>
        <AddEventButton aria-label="Add event">
          <CalendarAddIcon />
        </AddEventButton>
      </MapPanel>

      <Calendar>
        <CalendarHeader>
          <MonthButton>
            May 2024
            <Chevron width={27} height={42} stroke={6} />
          </MonthButton>
          <MonthNav>
            <NavButton aria-label="Previous month">
              <Chevron width={39} height={60} stroke={8} left />
            </NavButton>
            <NavButton aria-label="Next month">
              <Chevron width={39} height={60} stroke={8} />
            </NavButton>
          </MonthNav>
        </CalendarHeader>
        <WeekdayRow>
          {weekdays.map((name) => <span key={name}>{name}</span>)}
        </WeekdayRow>
        <DayGrid>
          {days.map((day) => (
            <DayButton key={day} $column={day === 1 ? 4 : undefined}>
              {day}
              {day === 8 && <Books />}
            </DayButton>
          ))}
        </DayGrid>
      </Calendar>

      <TabBar>
        {tabs.map(([name, Icon]) => (
          <TabButton key={name} $active={tab === name} onClick={() => setTab(name)}>
            <Icon />
            {name}
          </TabButton>
        ))}
        <HomeIndicator />
      </TabBar>
    </Screen>
  );
}
